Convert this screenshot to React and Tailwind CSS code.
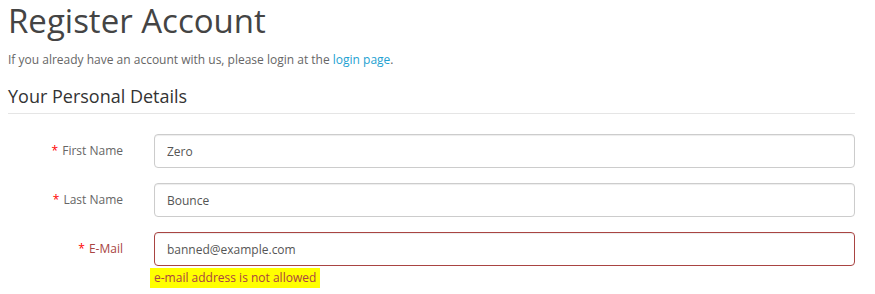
export default function App() {
  const fields = [
    { label: 'First Name', value: 'Zero' },
    { label: 'Last Name', value: 'Bounce' },
    { label: 'E-Mail', value: 'banned@example.com', error: 'e-mail address is not allowed' },
  ];

  return (
    <div className="bg-white px-2 text-[#666] [font-family:'Open_Sans',sans-serif]">
      <h1 className="text-[33px] leading-[42px] text-[#444]">Register Account</h1>
      <p className="mt-[8px] text-[12px] leading-[20px]">
        If you already have an account with us, please login at the{' '}
        <a href="#" className="text-[#23a1d1]">login page</a>.
      </p>

      <div className="mr-[12px]">
        <h2 className="mt-[13px] border-b border-[#e5e5e5] pb-[3px] text-[18px] leading-[27px] text-[#333]">
          Your Personal Details
        </h2>

        <div className="mt-[20px] flex flex-col gap-[15px]">
          {fields.map((f) => (
            <div key={f.label} className="flex items-start">
              <label
                className={
                  'w-[146px] shrink-0 pr-[31px] text-right text-[12px] leading-[34px] ' +
                  (f.error ? 'text-[#a94442]' : 'text-[#666]')
                }
              >
                <span className="mr-[4px] text-[#f00]">*</span>
                {f.label}
              </label>
              <div className="flex-1">
                <input
                  type="text"
                  defaultValue={f.value}
                  className={
                    'block h-[34px] w-full rounded-[4px] border bg-white px-[12px] text-[12px] text-[#555] outline-none shadow-[inset_0_1px_1px_rgba(0,0,0,0.075)] ' +
                    (f.error ? 'border-[#a94442]' : 'border-[#ccc]')
                  }
                />
                {f.error && (
                  <p className="-ml-[4px] mt-[2px] w-fit bg-[#ffff00] px-[4px] text-[12px] leading-[20px] text-[#a94442]">
                    {f.error}
                  </p>
                )}
              </div>
            </div>
          ))}
        </div>
      </div>
    </div>
  );
}
